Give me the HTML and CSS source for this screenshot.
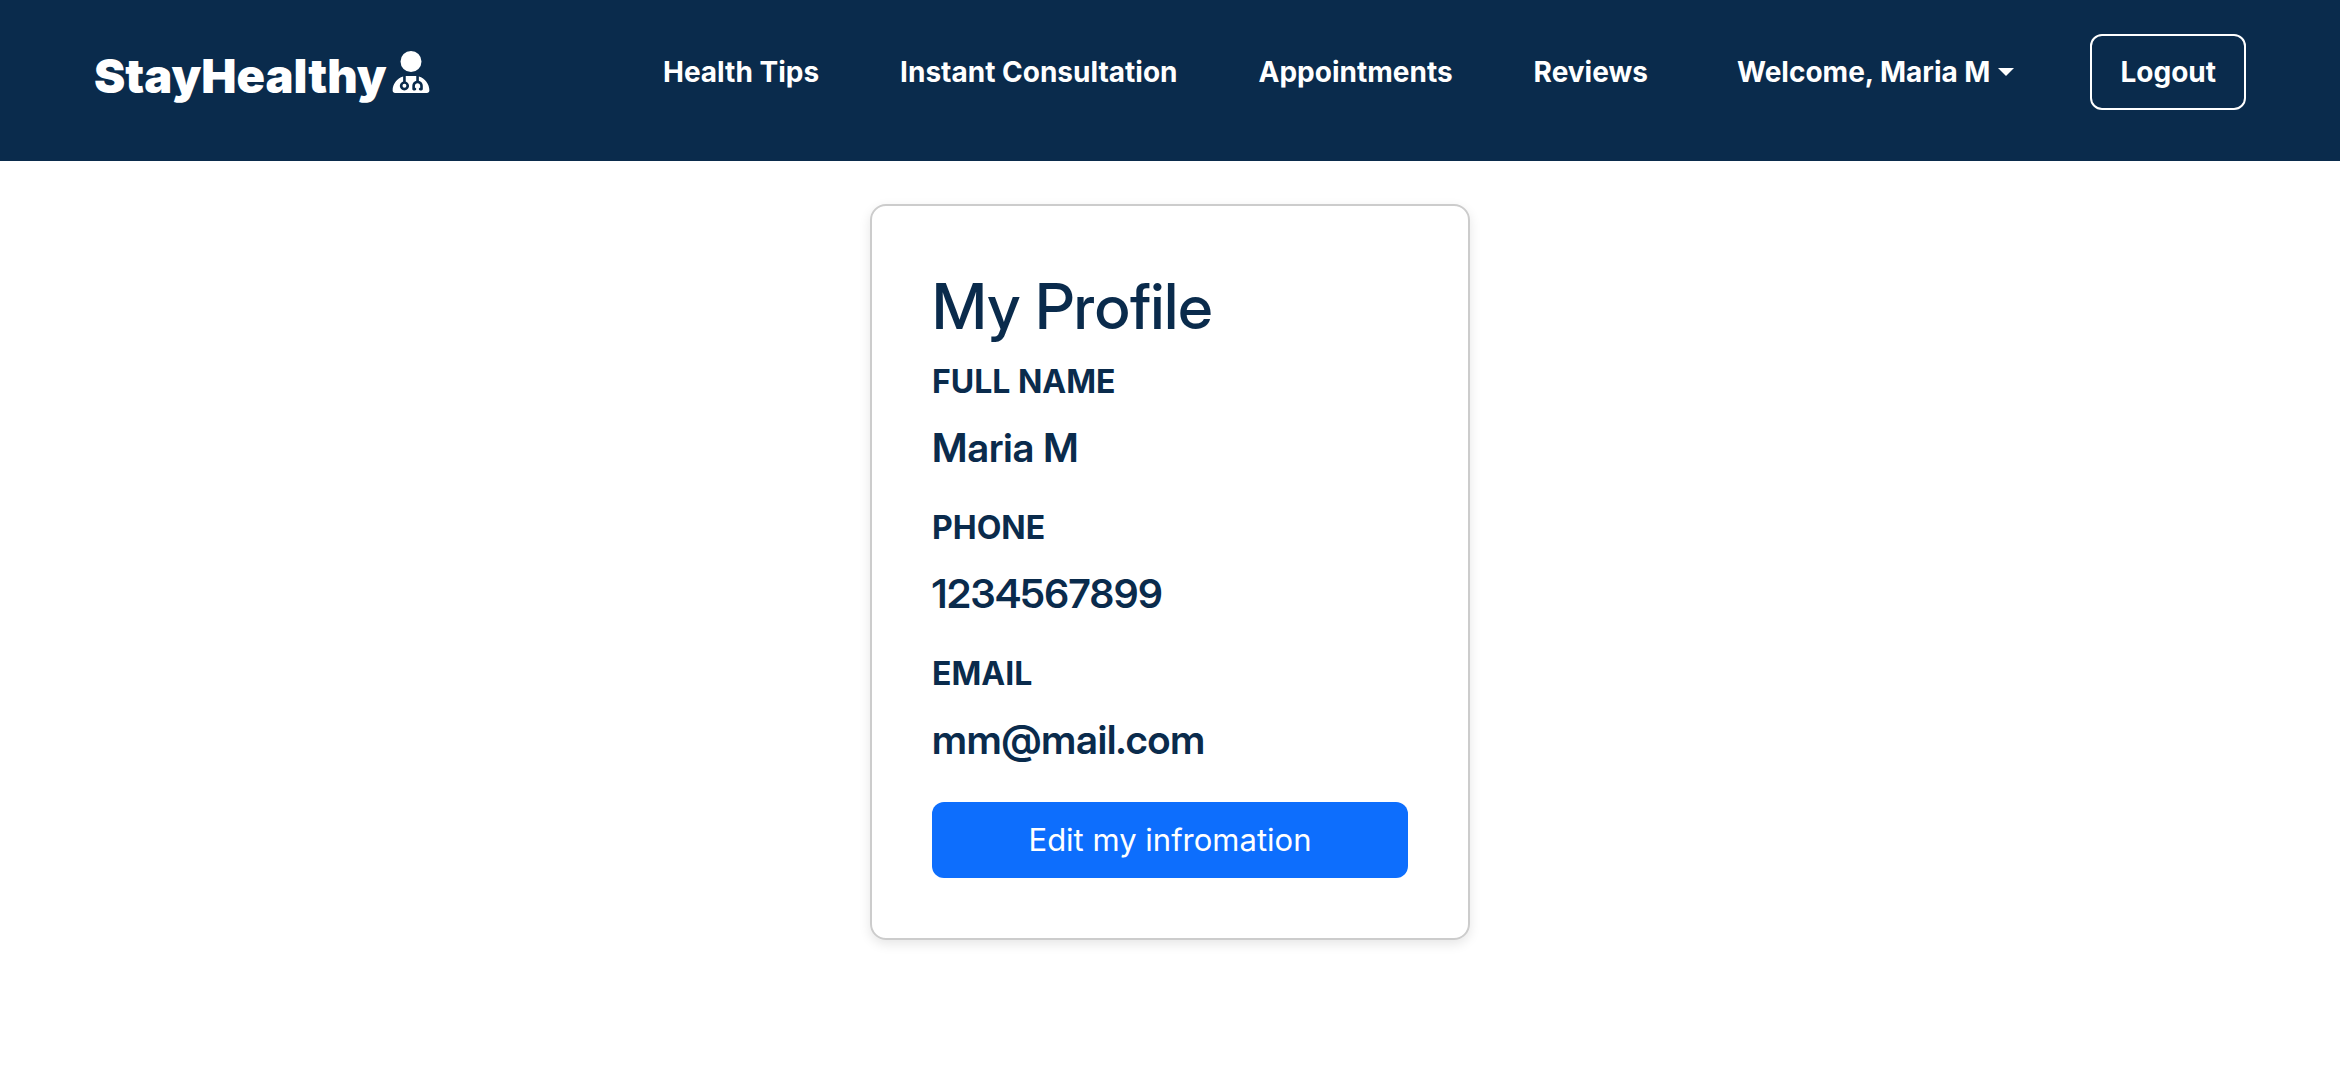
FILE: index.html
```html
<!DOCTYPE html>
<html lang="en">
<head>
  <meta charset="utf-8">
  <meta name="viewport" content="width=device-width, initial-scale=1">
  <title>StayHealthy - My Profile</title>
  <link rel="stylesheet" href="styles.css">
</head>
<body>
  <header class="navbar">
    <a class="brand" href="#">
      <span>StayHealthy</span>
      <svg class="brand-icon" viewBox="0 0 448 512" aria-hidden="true"><path fill="currentColor" d="M224 256A128 128 0 1 0 224 0a128 128 0 1 0 0 256zm-96 55.2C54 332.9 0 401.3 0 482.3C0 498.7 13.3 512 29.7 512H418.3c16.4 0 29.7-13.3 29.7-29.7c0-81-54-149.4-128-171.1V362c27.6 7.1 48 32.2 48 62v40c0 8.8-7.2 16-16 16H336c-8.8 0-16-7.2-16-16s7.2-16 16-16V424c0-17.7-14.3-32-32-32s-32 14.3-32 32v24c8.8 0 16 7.2 16 16s-7.2 16-16 16H256c-8.8 0-16-7.2-16-16V424c0-29.8 20.4-54.9 48-62V304.9c-6-.6-12.1-.9-18.3-.9H178.3c-6.2 0-12.3 .3-18.3 .9v65.4c23.1 6.9 40 28.3 40 53.7c0 30.9-25.1 56-56 56s-56-25.1-56-56c0-25.4 16.9-46.8 40-53.7V311.2zM144 448a24 24 0 1 0 0-48 24 24 0 1 0 0 48z"/></svg>
    </a>
    <nav class="menu" aria-label="Main">
      <ul class="links">
        <li><a href="#">Health Tips</a></li>
        <li><a href="#">Instant Consultation</a></li>
        <li><a href="#">Appointments</a></li>
        <li><a href="#">Reviews</a></li>
      </ul>
      <button class="user-toggle" type="button" aria-haspopup="true">Welcome, Maria M<span class="caret"></span></button>
      <button class="logout" type="button">Logout</button>
    </nav>
  </header>
  <main class="page">
    <section class="card">
      <h1 class="title">My Profile</h1>
      <dl class="details">
        <dt>FULL NAME</dt>
        <dd>Maria M</dd>
        <dt>PHONE</dt>
        <dd>1234567899</dd>
        <dt>EMAIL</dt>
        <dd>mm@mail.com</dd>
      </dl>
      <button class="edit" type="button">Edit my infromation</button>
    </section>
  </main>
</body>
</html>
```
FILE: styles.css
```css
* {
  box-sizing: border-box;
}

body {
  margin: 0;
  background: #fff;
  color: #0a2b4c;
  font-family: Inter, "Liberation Sans", sans-serif;
}

button {
  font-family: inherit;
  cursor: pointer;
}

.navbar {
  display: flex;
  justify-content: space-between;
  align-items: flex-start;
  padding: 34px 94px 51px;
  background: #0a2b4c;
  color: #fff;
}

.brand {
  display: flex;
  align-items: baseline;
  gap: 5px;
  padding-top: 12px;
  color: inherit;
  font-size: 47px;
  font-weight: 900;
  line-height: 60px;
  text-decoration: none;
}

.brand-icon {
  width: 38px;
  height: 42px;
}

.menu,
.links {
  display: flex;
  align-items: center;
}

.links {
  gap: 81px;
  margin: 0;
  padding: 0;
  list-style: none;
}

.links a,
.user-toggle,
.logout {
  color: #fff;
  font-size: 28px;
  font-weight: 700;
  line-height: 40px;
  text-decoration: none;
}

.user-toggle {
  display: flex;
  align-items: center;
  gap: 8px;
  margin: 0 76px 0 89px;
  padding: 0;
  border: 0;
  background: none;
}

.caret {
  border: 8px solid transparent;
  border-top-color: #fff;
  border-bottom: 0;
}

.logout {
  padding: 16px 28px;
  border: 2px solid #fff;
  border-radius: 12px;
  background: none;
}

.page {
  padding: 43px 24px;
}

.card {
  max-width: 600px;
  margin: 0 auto;
  padding: 60px;
  border: 2px solid #ccc;
  border-radius: 16px;
  box-shadow: 0 4px 12px rgba(0, 0, 0, 0.1);
}

.title,
.details dd {
  font-family: "Inter Display", Inter, "Liberation Sans", sans-serif;
}

.title {
  margin: 0 0 12px;
  font-size: 63px;
  font-weight: 500;
  line-height: 80px;
}

.details {
  margin: 0 0 32px;
}

.details dt {
  font-size: 32px;
  font-weight: 700;
  line-height: 48px;
}

.details dd {
  margin: 12px 0 26px;
  font-size: 40px;
  font-weight: 600;
  line-height: 60px;
}

.details dd:last-child {
  margin-bottom: 0;
}

.edit {
  width: 100%;
  padding: 14px 24px;
  border: 0;
  border-radius: 12px;
  background: #0d6efd;
  color: #fff;
  font-size: 31px;
  line-height: 48px;
}
```
